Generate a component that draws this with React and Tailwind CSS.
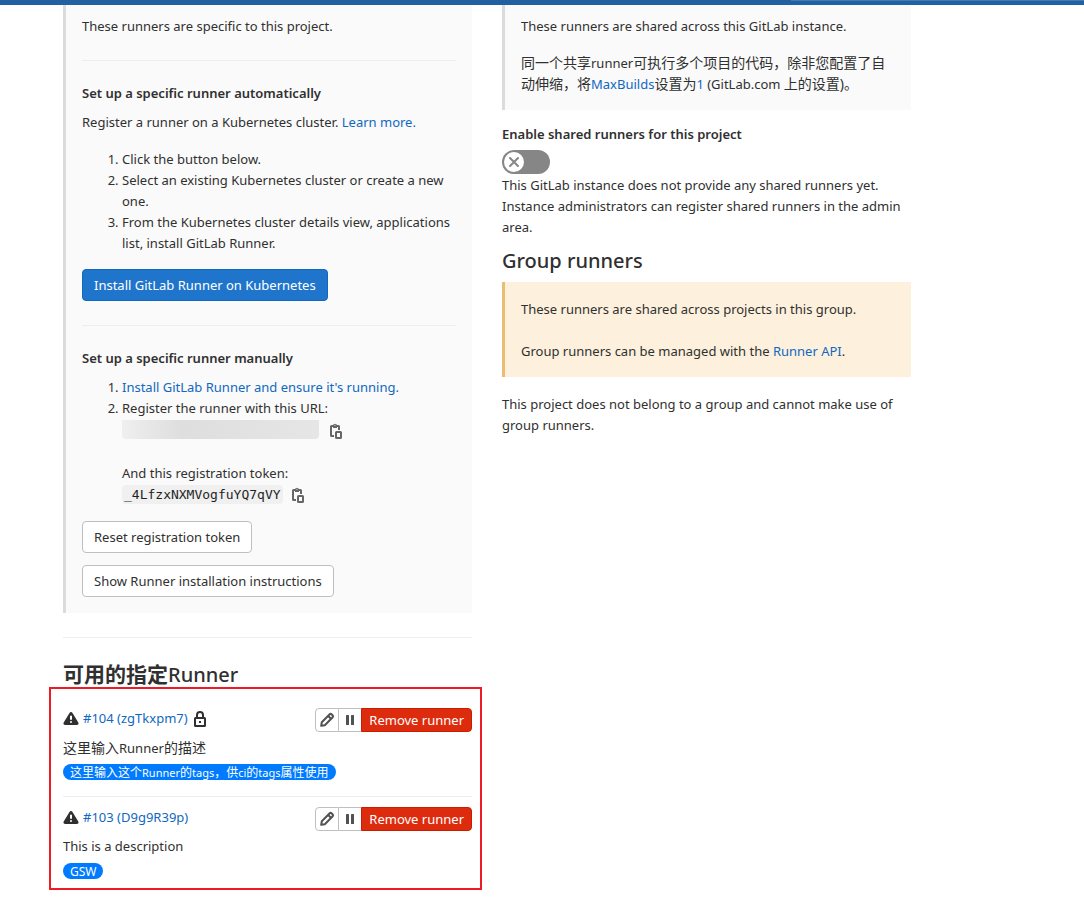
import { useState } from 'react'

const runners = [
  {
    id: 104,
    token: 'zgTkxpm7',
    locked: true,
    description: '这里输入Runner的描述',
    tag: '这里输入这个Runner的tags，供ci的tags属性使用',
  },
  {
    id: 103,
    token: 'D9g9R39p',
    locked: false,
    description: 'This is a description',
    tag: 'GSW',
  },
]

const hasChinese = (text) => /[\u4e00-\u9fff]/.test(text)

const CopyIcon = () => (
  <svg width="12" height="16" viewBox="0 0 12 16" fill="none" stroke="#666" strokeWidth="2">
    <path d="M4 13H1.5a.5.5 0 0 1-.5-.5v-9A.5.5 0 0 1 1.5 3h7a.5.5 0 0 1 .5.5V7" />
    <path d="M3 1.5h1a1.2 1.2 0 0 1 2 0h1V5H3z" fill="#666" stroke="none" />
    <path d="M4.5 2.500h1" stroke="#ccc" strokeWidth="1" />
    <rect x="6" y="9" width="5" height="6" rx="0.5" />
  </svg>
)

const PencilIcon = () => (
  <svg width="16" height="16" viewBox="0 0 16 16" fill="none" stroke="#525252" strokeWidth="2">
    <path
      d="M2.2 13.8l.6-3.6 7.9-7.9a1.3 1.3 0 0 1 1.8 0l1.2 1.2a1.3 1.3 0 0 1 0 1.8l-7.9 7.9z"
      strokeLinejoin="round"
    />
    <path d="M9.2 4l2.8 2.8" />
  </svg>
)

const PauseIcon = () => (
  <svg width="16" height="16" viewBox="0 0 16 16" fill="#525252">
    <rect x="4" y="3" width="3" height="10" rx="0.5" />
    <rect x="9" y="3" width="3" height="10" rx="0.5" />
  </svg>
)

const WarningIcon = () => (
  <svg width="16" height="16" viewBox="0 0 16 16" fill="#303030">
    <path
      fillRule="evenodd"
      d="M9.5 1.9l5.8 9.6c.7 1.2-.1 2.5-1.5 2.5H2.2C.8 14 0 12.7.7 11.5l5.8-9.6c.7-1.2 2.3-1.2 3 0zM8 4.500a1 1 0 0 0-1 1V8a1 1 0 0 0 2 0V5.500a1 1 0 0 0-1-1zM8 10a1 1 0 1 0 0 2 1 1 0 0 0 0-2z"
    />
  </svg>
)

const LockIcon = () => (
  <svg width="12" height="16" viewBox="0 0 12 16" fill="none" stroke="#303030" strokeWidth="2">
    <rect x="1" y="7" width="10" height="8" rx="0.5" />
    <path d="M3 7V4a3 3 0 0 1 6 0v3" />
    <rect x="5" y="10" width="2" height="2" fill="#303030" stroke="none" />
  </svg>
)

const Link = ({ children }) => (
  <a href="#" className="text-[#1068bf] hover:underline">
    {children}
  </a>
)

// Latin words inside Chinese text are set one step smaller than the characters around them
const Mixed = ({ text, latin }) => {
  if (!hasChinese(text)) return text
  return text.split(/([A-Za-z]+)/).map((part, i) =>
    i % 2 ? (
      <span key={i} className={latin}>
        {part}
      </span>
    ) : (
      part
    )
  )
}

const RunnerRow = ({ runner }) => (
  <li className="border-b border-[#eee] last:border-b-0 pt-[10px] pb-4 last:pb-[9px]">
    <div className="flex items-start justify-between">
      <div className="flex items-center gap-1 h-[21px]">
        <WarningIcon />
        <Link>
          #{runner.id} ({runner.token})
        </Link>
        {runner.locked && (
          <span className="ml-[2px]">
            <LockIcon />
          </span>
        )}
      </div>
      <div className="flex h-6">
        <button
          aria-label="Edit"
          className="w-6 flex items-center justify-center bg-white border border-[#bfbfbf] rounded-l"
        >
          <PencilIcon />
        </button>
        <button
          aria-label="Pause"
          className="w-[22px] flex items-center justify-center bg-white border-y border-[#bfbfbf]"
        >
          <PauseIcon />
        </button>
        <button className="px-[7px] bg-[#dd2b0e] border border-[#c91c00] text-white rounded-r leading-4">
          Remove runner
        </button>
      </div>
    </div>
    <p className={hasChinese(runner.description) ? 'mt-[5px] text-[14px]' : 'mt-[5px]'}>
      <Mixed text={runner.description} latin="text-[13px] leading-none" />
    </p>
    <div className="mt-[6px] flex">
      <span className="h-4 px-[7px] rounded-full bg-[#007bff] text-white text-[12px] leading-[17px] whitespace-nowrap">
        <Mixed text={runner.tag} latin="text-[11px] leading-none" />
      </span>
    </div>
  </li>
)

const SpecificRunners = () => (
  <section>
    <div className="border-l-[3px] border-[#dbdbdb] bg-[#fafafa] px-4 pt-[11px] pb-4">
      <p>These runners are specific to this project.</p>
      <hr className="mt-[23px] mb-[22px] border-[#eee]" />
      <h5 className="font-semibold">Set up a specific runner automatically</h5>
      <p className="mt-2">
        Register a runner on a Kubernetes cluster. <Link>Learn more.</Link>
      </p>
      <ol className="mt-4 pl-10 list-decimal">
        <li>Click the button below.</li>
        <li>Select an existing Kubernetes cluster or create a new one.</li>
        <li>From the Kubernetes cluster details view, applications list, install GitLab Runner.</li>
      </ol>
      <button className="mt-[15px] h-8 px-[11px] block rounded bg-[#1f75cb] border border-[#1068bf] text-white">
        Install GitLab Runner on Kubernetes
      </button>
      <hr className="mt-6 mb-[22px] border-[#eee]" />
      <h5 className="font-semibold">Set up a specific runner manually</h5>
      <ol className="mt-2 pl-10 list-decimal">
        <li>
          <Link>Install GitLab Runner and ensure it's running.</Link>
        </li>
        <li>
          Register the runner with this URL:
          <div className="flex items-center gap-[11px] h-6">
            <span className="w-[197px] h-[19px] mb-1 rounded-b bg-linear-to-r from-[#efefef] via-[#dedede] via-30% to-[#e6e6e6]" />
            <button aria-label="Copy URL">
              <CopyIcon />
            </button>
          </div>
          <p className="mt-5">And this registration token:</p>
          <div className="flex items-center gap-[9px] h-[21px]">
            <code className="px-[2px] h-[19px] leading-[19px] rounded bg-[#f0f0f0] text-[#1f1f1f] text-[13px] font-['DejaVu_Sans_Mono',monospace]">
              _4LfzxNXMVogfuYQ7qVY
            </code>
            <button aria-label="Copy token">
              <CopyIcon />
            </button>
          </div>
        </li>
      </ol>
      <div className="mt-4 flex flex-col items-start gap-3">
        <button className="h-8 px-[11px] rounded bg-white border border-[#bfbfbf]">Reset registration token</button>
        <button className="h-8 px-[11px] rounded bg-white border border-[#bfbfbf]">
          Show Runner installation instructions
        </button>
      </div>
    </div>
    <hr className="mt-6 border-[#eee]" />
    <h4 className="mt-6 h-[25px] text-[20px] leading-[26px] font-medium">
      <span className="text-[21px] leading-none font-bold">可用的指定</span>Runner
    </h4>
    <ul className="-ml-[14px] -mr-[10px] pl-3 pr-2 pt-[9px] border-2 border-[#ed1c24]">
      {runners.map((runner) => (
        <RunnerRow key={runner.id} runner={runner} />
      ))}
    </ul>
  </section>
)

const SharedRunners = () => {
  const [enabled, setEnabled] = useState(false)

  return (
    <section>
      <div className="border-l-[3px] border-[#dbdbdb] bg-[#fafafa] px-4 pt-[11px] pb-4">
        <p>These runners are shared across this GitLab instance.</p>
        <p className="mt-[15px] text-[14px]">
          <Mixed
            text="同一个共享runner可执行多个项目的代码，除非您配置了自动伸缩，将"
            latin="text-[13px] leading-none"
          />
          <span className="text-[13px] leading-none">
            <Link>MaxBuilds</Link>
          </span>
          设置为
          <span className="text-[13px] leading-none">
            <Link>1</Link> (GitLab.com{' '}
          </span>
          上的设置)。
        </p>
      </div>
      <h5 id="shared-label" className="mt-[14px] font-semibold">
        Enable shared runners for this project
      </h5>
      <button
        role="switch"
        aria-checked={enabled}
        aria-labelledby="shared-label"
        onClick={() => setEnabled(!enabled)}
        className={`mt-[5px] w-12 h-6 p-[2px] flex items-center rounded-full ${
          enabled ? 'bg-[#1068bf] justify-end' : 'bg-[#868686]'
        }`}
      >
        <span className="size-5 rounded-full bg-white flex items-center justify-center">
          <svg width="12" height="12" viewBox="0 0 12 12" stroke="#868686" strokeWidth="2" strokeLinecap="round">
            <path d="M2 2l8 8M10 2l-8 8" />
          </svg>
        </span>
      </button>
      <p className="mt-px">
        This GitLab instance does not provide any shared runners yet. Instance administrators can register shared
        runners in the admin area.
      </p>
      <h4 className="mt-[9px] text-[20px] leading-[28px] font-medium">Group runners</h4>
      <div className="mt-[7px] border-l-[3px] border-[#e9be74] bg-[#fdf1dd] px-4 pt-[17px] pb-[15px]">
        <p>These runners are shared across projects in this group.</p>
        <p className="mt-[21px]">
          Group runners can be managed with the <Link>Runner API</Link>.
        </p>
      </div>
      <p className="mt-[17px]">This project does not belong to a group and cannot make use of group runners.</p>
    </section>
  )
}

export default function App() {
  return (
    <div className="min-h-screen bg-white text-[#303030] text-[13px] leading-[21px] font-['Noto_Sans','Noto_Sans_CJK_SC',sans-serif]">
      <header className="h-[5px] bg-[#2161a1] flex justify-end">
        <div className="w-[27%] h-px bg-[#427ab2]" />
      </header>
      <main className="grid grid-cols-2 gap-[30px] pl-[63px] pr-[173px]">
        <SpecificRunners />
        <SharedRunners />
      </main>
    </div>
  )
}
